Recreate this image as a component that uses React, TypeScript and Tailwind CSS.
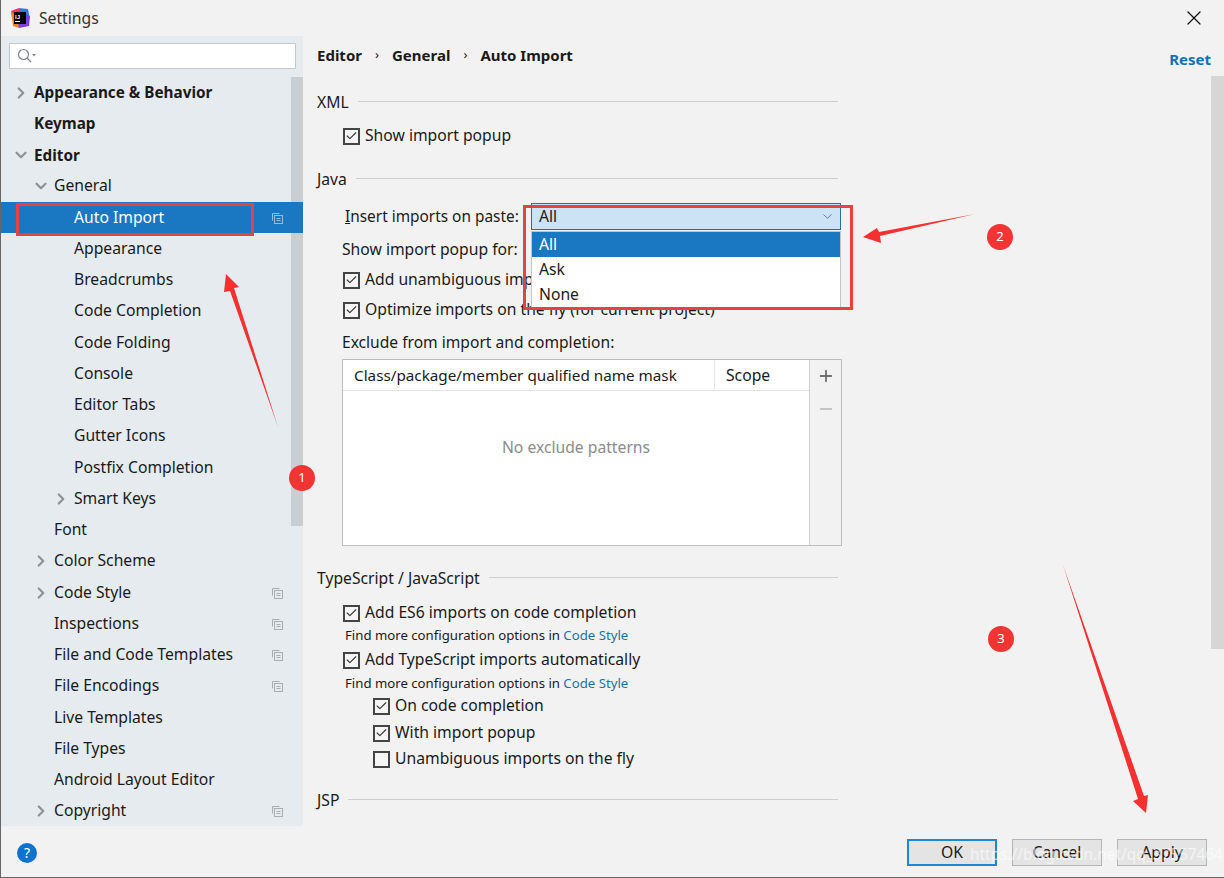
import { Check, ChevronDown, ChevronRight, Minus, Plus, X } from "lucide-react";

type TreeRow = {
  label: string;
  level: 0 | 1 | 2;
  arrow?: "right" | "down";
  copy?: boolean;
  selected?: boolean;
  bold?: boolean;
};

const treeRows: TreeRow[] = [
  { label: "Appearance & Behavior", level: 0, arrow: "right", bold: true },
  { label: "Keymap", level: 0, bold: true },
  { label: "Editor", level: 0, arrow: "down", bold: true },
  { label: "General", level: 1, arrow: "down" },
  { label: "Auto Import", level: 2, copy: true, selected: true },
  { label: "Appearance", level: 2 },
  { label: "Breadcrumbs", level: 2 },
  { label: "Code Completion", level: 2 },
  { label: "Code Folding", level: 2 },
  { label: "Console", level: 2 },
  { label: "Editor Tabs", level: 2 },
  { label: "Gutter Icons", level: 2 },
  { label: "Postfix Completion", level: 2 },
  { label: "Smart Keys", level: 2, arrow: "right" },
  { label: "Font", level: 1 },
  { label: "Color Scheme", level: 1, arrow: "right" },
  { label: "Code Style", level: 1, arrow: "right", copy: true },
  { label: "Inspections", level: 1, copy: true },
  { label: "File and Code Templates", level: 1, copy: true },
  { label: "File Encodings", level: 1, copy: true },
  { label: "Live Templates", level: 1 },
  { label: "File Types", level: 1 },
  { label: "Android Layout Editor", level: 1 },
  { label: "Copyright", level: 1, arrow: "right", copy: true },
];

function CopyIcon({ light }: { light?: boolean }) {
  const stroke = light ? "#8fbfe2" : "#a9adb2";
  return (
    <svg width="12" height="12" viewBox="0 0 12 12" fill="none" stroke={stroke} strokeWidth="1">
      <path d="M1.5 8.5V1.5H8.5" />
      <rect x="3.5" y="3.5" width="8" height="8" />
      <path d="M5.5 6.5H9.5M5.5 8.5H9.5" />
    </svg>
  );
}

function AppLogo() {
  return (
    <svg width="20" height="20" viewBox="0 0 20 20">
      <path d="M1 3 L9 0 L13 3 L6 11 L2 9 Z" fill="#f0355d" />
      <path d="M9 0 L18 1 L20 11 L13 8 Z" fill="#2a7de1" />
      <path d="M2 9 L9 20 L19 18 L20 8 L8 6 Z" fill="#7a3fe0" />
      <path d="M1 3 L3 18 L9 20 L7 9 Z" fill="#fc801d" />
      <rect x="4" y="4" width="12" height="12" fill="#000" />
      <text x="5" y="10.5" fontSize="6" fontWeight="700" fill="#fff" className="font-['Liberation_Sans',sans-serif]">
        IJ
      </text>
      <rect x="5" y="13" width="5" height="1" fill="#fff" />
    </svg>
  );
}

function Tree() {
  return (
    <div className="flex-1 min-w-0">
      {treeRows.map((row) => (
        <div
          key={row.label}
          className={`h-[31.25px] flex items-center relative ${row.selected ? "bg-[#1a78c2] text-white -mr-[12px]" : "text-[#1a1a1a]"} ${row.bold ? "font-bold text-[15.3px]" : ""} ${
            row.level === 0 ? "pl-[33px]" : row.level === 1 ? "pl-[53px]" : "pl-[73px]"
          }`}
        >
          {row.arrow === "right" && (
            <ChevronRight size={18} strokeWidth={3} className="text-[#8f9297] -ml-[22px] mr-[4px] shrink-0" />
          )}
          {row.arrow === "down" && (
            <ChevronDown size={18} strokeWidth={3} className="text-[#8f9297] -ml-[22px] mr-[4px] shrink-0" />
          )}
          <span>{row.label}</span>
          {row.copy && (
            <span className={`ml-auto flex ${row.selected ? "mr-[20px]" : "mr-[8px]"}`}>
              <CopyIcon light={row.selected} />
            </span>
          )}
        </div>
      ))}
    </div>
  );
}

function Sidebar() {
  return (
    <aside className="w-[302px] shrink-0 bg-[#e6ebf0] flex flex-col overflow-hidden">
      <div className="h-[40.9px] pl-[8px] pr-[7px] pt-[7px] shrink-0">
        <div className="h-[26px] bg-white border border-[#c4c8cc] flex items-center pl-[7px] gap-[1px]">
          <svg width="20" height="16" viewBox="0 0 20 16" fill="none" stroke="#7f8388" strokeWidth="1.2">
            <circle cx="6.5" cy="6.5" r="5" />
            <path d="M10 10L14 14" />
            <path d="M15 6h4l-2 2.5z" fill="#7f8388" stroke="none" />
          </svg>
        </div>
      </div>
      <div className="flex flex-1 min-h-0">
        <Tree />
        <div className="w-[12px] shrink-0">
          <div className="h-[449px] bg-[#c9ced3]" />
        </div>
      </div>
    </aside>
  );
}

function Box({ checked = true }: { checked?: boolean }) {
  return (
    <span className="w-[17px] h-[17px] border-2 border-[#444] bg-[#f5f5f5] flex items-center justify-center shrink-0">
      {checked && <Check size={14} strokeWidth={2} className="text-[#333]" />}
    </span>
  );
}

function CheckRow({ label, className, checked }: { label: string; className: string; checked?: boolean }) {
  return (
    <div className={`flex items-center gap-[5px] ${className}`}>
      <Box checked={checked} />
      <span>{label}</span>
    </div>
  );
}

function SectionTitle({ label, className }: { label: string; className: string }) {
  return (
    <div className={`w-[521px] h-[24px] flex items-center gap-[9px] ${className}`}>
      <span>{label}</span>
      <span className="flex-1 h-px bg-[#cfcfcf] -translate-y-[2px]" />
    </div>
  );
}

function Hint({ className }: { className: string }) {
  return (
    <div className={`ml-[28px] h-[20px] flex items-center text-[13.2px] ${className}`}>
      Find more configuration options in&nbsp;<span className="text-[#1a70ad]">Code Style</span>
    </div>
  );
}

function ExcludeTable() {
  return (
    <div className="ml-[25px] mt-[4px] w-[500px] h-[187px] border border-[#bdbdbd] flex">
      <div className="flex-1 bg-white flex flex-col">
        <div className="h-[31px] border-b border-[#e3e3e3] flex items-center">
          <div className="w-[372px] pl-[11px] border-r border-[#e3e3e3] h-full flex items-center text-[15.25px]">
            Class/package/member qualified name mask
          </div>
          <div className="pl-[11px] pt-[1px]">Scope</div>
        </div>
        <div className="flex-1 flex items-center justify-center text-[#8c8c8c] pb-[40px]">No exclude patterns</div>
      </div>
      <div className="w-[32px] border-l border-[#d0d0d0] flex flex-col items-center pt-[7px] gap-[15px]">
        <Plus size={18} strokeWidth={2.4} className="text-[#6e6e6e]" />
        <Minus size={18} strokeWidth={2.4} className="text-[#c4c4c4]" />
      </div>
    </div>
  );
}

function Content() {
  return (
    <main className="flex-1 min-w-0 pl-[14px] text-[#1a1a1a] flex flex-col">
      <div className="h-[38px] flex items-center justify-between text-[15px]">
        <div className="flex items-center font-bold">
          <span>Editor</span>
          <span className="mx-[13px] font-normal text-[13px]">›</span>
          <span>General</span>
          <span className="mx-[13px] font-normal text-[13px]">›</span>
          <span>Auto Import</span>
        </div>
        <span className="font-bold text-[#1070b8] mt-[8px]">Reset</span>
      </div>

      <SectionTitle label="XML" className="mt-[17px]" />
      <CheckRow label="Show import popup" className="ml-[26px] h-[24px] mt-[9px]" />

      <SectionTitle label="Java" className="mt-[20px]" />
      <div className="ml-[28px] h-[27px] mt-[11px] flex items-center relative">
        <span className="w-[186px] text-[15.4px]">
          <span className="underline">I</span>nsert imports on paste:
        </span>
        <div className="w-[310px] h-[27px] bg-[#cce3f6] border border-[#2a6ca0] flex items-center justify-between pl-[7px] pr-[5px]">
          <span>All</span>
          <ChevronDown size={15} strokeWidth={1.5} className="text-[#55789a]" />
        </div>
      </div>
      <div className="ml-[25px] h-[24px] mt-[8px] flex items-center">Show import popup for:</div>
      <CheckRow label="Add unambiguous imports on the fly" className="ml-[26px] h-[24px] mt-[6px]" />
      <CheckRow label="Optimize imports on the fly (for current project)" className="ml-[26px] h-[24px] mt-[6px]" />
      <div className="ml-[25px] h-[24px] mt-[9px] flex items-center text-[15.6px]">Exclude from import and completion:</div>
      <ExcludeTable />

      <SectionTitle label="TypeScript / JavaScript" className="mt-[21px]" />
      <CheckRow label="Add ES6 imports on code completion" className="ml-[26px] h-[24px] mt-[10px]" />
      <Hint className="mt-[1px]" />
      <CheckRow label="Add TypeScript imports automatically" className="ml-[26px] h-[24px] mt-[2px]" />
      <Hint className="mt-[2px]" />
      <CheckRow label="On code completion" className="ml-[56px] h-[24px] mt-[0px]" />
      <CheckRow label="With import popup" className="ml-[56px] h-[24px] mt-[3px]" />
      <CheckRow label="Unambiguous imports on the fly" checked={false} className="ml-[56px] h-[24px] mt-[2px]" />

      <SectionTitle label="JSP" className="mt-[18px]" />
    </main>
  );
}

function FooterButton({ label, primary }: { label: string; primary?: boolean }) {
  return (
    <button
      className={`w-[90px] h-[27px] bg-[#e4e4e4] flex items-center justify-center text-[#1a1a1a] ${
        primary ? "border-2 border-[#1e88d8]" : "border border-[#b5b5b5]"
      }`}
    >
      {label}
    </button>
  );
}

function Annotations() {
  return (
    <>
      <svg className="absolute -left-px top-0 pointer-events-none" width="1224" height="878" fill="#f5302f">
        <polygon points="226,274 239,287 234,288 278,427 230,291 224,292" />
        <polygon points="975,214 880,236 881,243 863,237 877,228 879,232" />
        <polygon points="1063,565 1144,796 1148,795 1146,813 1133,801 1138,799" />
      </svg>
      <div className="absolute left-[15px] top-[203px] w-[238px] h-[33px] border-[3px] border-[#e8423f]" />
      <div className="absolute left-[530px] top-[231px] w-[310px] h-[77px] bg-white border border-[#c4c4c4] text-[#1a1a1a]">
        <div className="h-[25px] bg-[#1a78c2] text-white pl-[7px] flex items-center">All</div>
        <div className="h-[25px] pl-[7px] flex items-center">Ask</div>
        <div className="h-[25px] pl-[7px] flex items-center">None</div>
      </div>
      <div className="absolute left-[522px] top-[205px] w-[330px] h-[105px] border-[3px] border-[#e8423f]" />
      <div className="absolute left-[288px] top-[465px] w-[26px] h-[26px] rounded-full bg-[#f23434] text-white text-[13px] flex items-center justify-center">
        1
      </div>
      <div className="absolute left-[986px] top-[224px] w-[26px] h-[26px] rounded-full bg-[#f23434] text-white text-[13px] flex items-center justify-center">
        2
      </div>
      <div className="absolute left-[987px] top-[626px] w-[26px] h-[26px] rounded-full bg-[#f23434] text-white text-[13px] flex items-center justify-center">
        3
      </div>
      <div className="absolute left-[969px] top-[843px] text-[15.4px] text-white/60 whitespace-nowrap">
        https://blog.csdn.net/qq_37557464
      </div>
    </>
  );
}

export default function App() {
  return (
    <div className="relative w-[1224px] h-[878px] overflow-hidden bg-[#f2f2f2] border-l border-b border-[#666] flex flex-col text-[15.7px] text-[#1a1a1a] font-['Noto_Sans',sans-serif]">
      <header className="h-[36px] shrink-0 flex items-center pl-[9px] pr-[18px]">
        <AppLogo />
        <span className="ml-[9px] mt-[1px] text-[#333]">Settings</span>
        <X size={24} strokeWidth={1.2} className="ml-auto text-[#111]" />
      </header>
      <div className="flex flex-1 min-h-0">
        <Sidebar />
        <Content />
        <div className="w-[13px] shrink-0 pt-[40px]">
          <div className="h-[573px] bg-[#d6d6d6]" />
        </div>
      </div>
      <footer className="h-[51px] shrink-0 flex items-center pt-[2px] pl-[16px] pr-[17px]">
        <span className="w-[20px] h-[20px] rounded-full bg-[#0f72cf] text-white text-[14px] flex items-center justify-center">?</span>
        <div className="ml-auto flex gap-[15px]">
          <FooterButton label="OK" primary />
          <FooterButton label="Cancel" />
          <FooterButton label="Apply" />
        </div>
      </footer>
      <Annotations />
    </div>
  );
}
